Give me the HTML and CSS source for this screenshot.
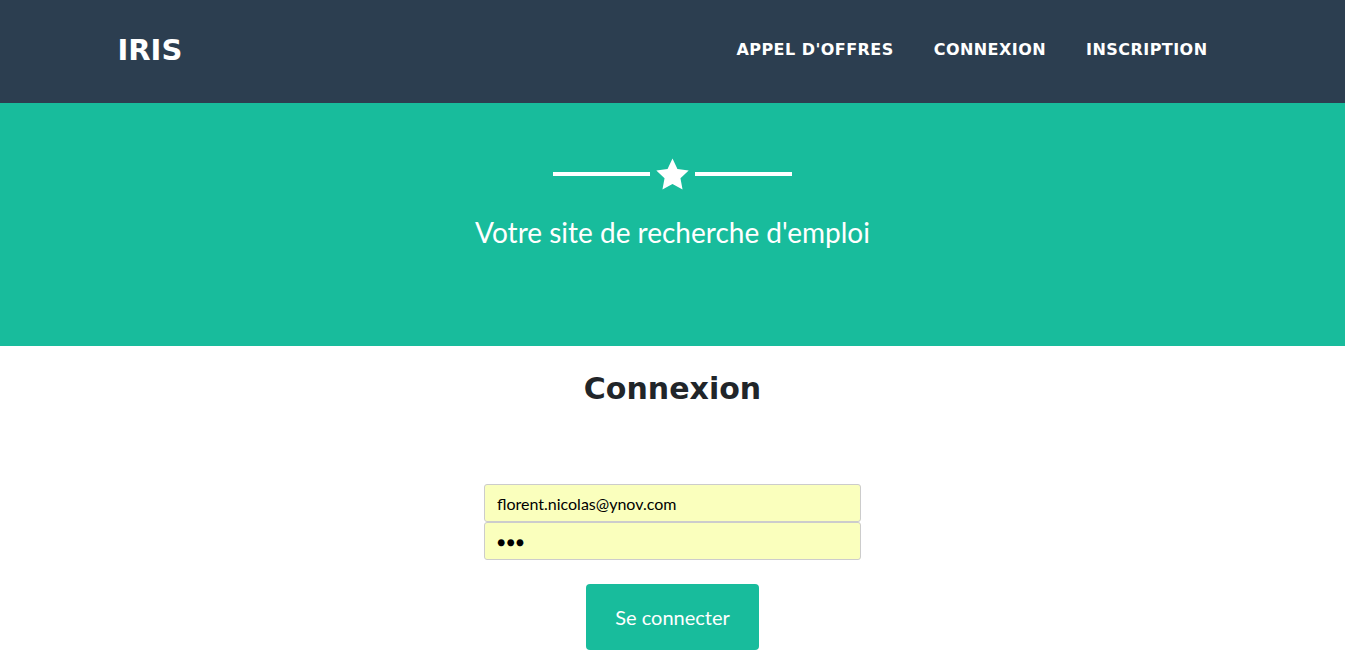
FILE: index.html
```html
<!DOCTYPE html>
<html lang="fr">
<head>
<meta charset="utf-8">
<title>IRIS</title>
<link rel="stylesheet" href="styles.css">
</head>
<body>
<nav class="navbar">
  <div class="container nav-inner">
    <a class="brand" href="#">IRIS</a>
    <ul class="nav-links">
      <li><a href="#">Appel d'offres</a></li>
      <li><a href="#">Connexion</a></li>
      <li><a href="#">Inscription</a></li>
    </ul>
  </div>
</nav>
<header class="hero">
  <div class="star-divider">
    <span class="line"></span>
    <svg class="star" viewBox="1 1 22 21" width="33" height="32"><path d="M12 1.2l3.3 6.9 7.5 1-5.5 5.2 1.4 7.5L12 18.2l-6.7 3.6 1.4-7.5L1.2 9.1l7.5-1z" fill="#fff"/></svg>
    <span class="line"></span>
  </div>
  <p class="tagline">Votre site de recherche d'emploi</p>
</header>
<main class="login">
  <h2 class="login-title">Connexion</h2>
  <form class="login-form">
    <input class="field" type="email" value="florent.nicolas@ynov.com">
    <div class="field pw">&#9679;&#9679;&#9679;</div>
    <button class="btn" type="button">Se connecter</button>
  </form>
</main>
</body>
</html>
```
FILE: styles.css
```css
* { box-sizing: border-box; }
html, body { margin: 0; padding: 0; }
body {
  font-family: Lato, "Liberation Sans", sans-serif;
  background: #fff;
  color: #212529;
}
.container {
  width: 1140px;
  margin: 0 auto;
  padding: 0 15px;
}
.navbar {
  background: #2c3e50;
  height: 103px;
}
.nav-inner {
  height: 100%;
  display: flex;
  align-items: center;
  justify-content: space-between;
}
.brand {
  font-family: "DejaVu Sans", sans-serif;
  font-weight: 700;
  font-size: 29px;
  color: #fff;
  text-decoration: none;
  margin-top: -3px;
}
.nav-links {
  list-style: none;
  margin: 0;
  padding: 0;
  display: flex;
  margin-top: -5px;
}
.nav-links a {
  display: block;
  padding: 0 20px;
  font-family: "DejaVu Sans", sans-serif;
  font-weight: 700;
  font-size: 16px;
  letter-spacing: 0.45px;
  text-transform: uppercase;
  color: #fff;
  text-decoration: none;
}
.hero {
  background: #18bc9c;
  height: 243px;
  padding-top: 55px;
  text-align: center;
  color: #fff;
}
.star-divider {
  display: flex;
  align-items: center;
  justify-content: center;
  gap: 6px;
}
.star-divider .line {
  width: 97px;
  height: 4px;
  background: #fff;
}
.tagline {
  margin: 25px 0 0;
  font-size: 28px;
  font-weight: 400;
}
.login {
  text-align: center;
}
.login-title {
  margin: 25px 0 0;
  font-family: "DejaVu Sans", sans-serif;
  font-weight: 700;
  font-size: 30px;
  color: #212529;
}
.login-form {
  margin-top: 78px;
  display: flex;
  flex-direction: column;
  align-items: center;
}
.field {
  width: 377px;
  height: 38px;
  background: #faffbd;
  border: 1px solid #ccc;
  border-radius: 3px;
  padding: 0 12px;
  font-family: Lato, sans-serif;
  font-size: 16px;
  color: #000;
  text-align: left;
  display: flex;
  align-items: center;
  margin: 0;
}
.pw {
  font-size: 14px;
  letter-spacing: 1px;
}
.btn {
  margin-top: 24px;
  width: 173px;
  height: 66px;
  background: #18bc9c;
  border: none;
  border-radius: 4px;
  color: #fff;
  font-family: Lato, sans-serif;
  font-size: 20px;
}
```
